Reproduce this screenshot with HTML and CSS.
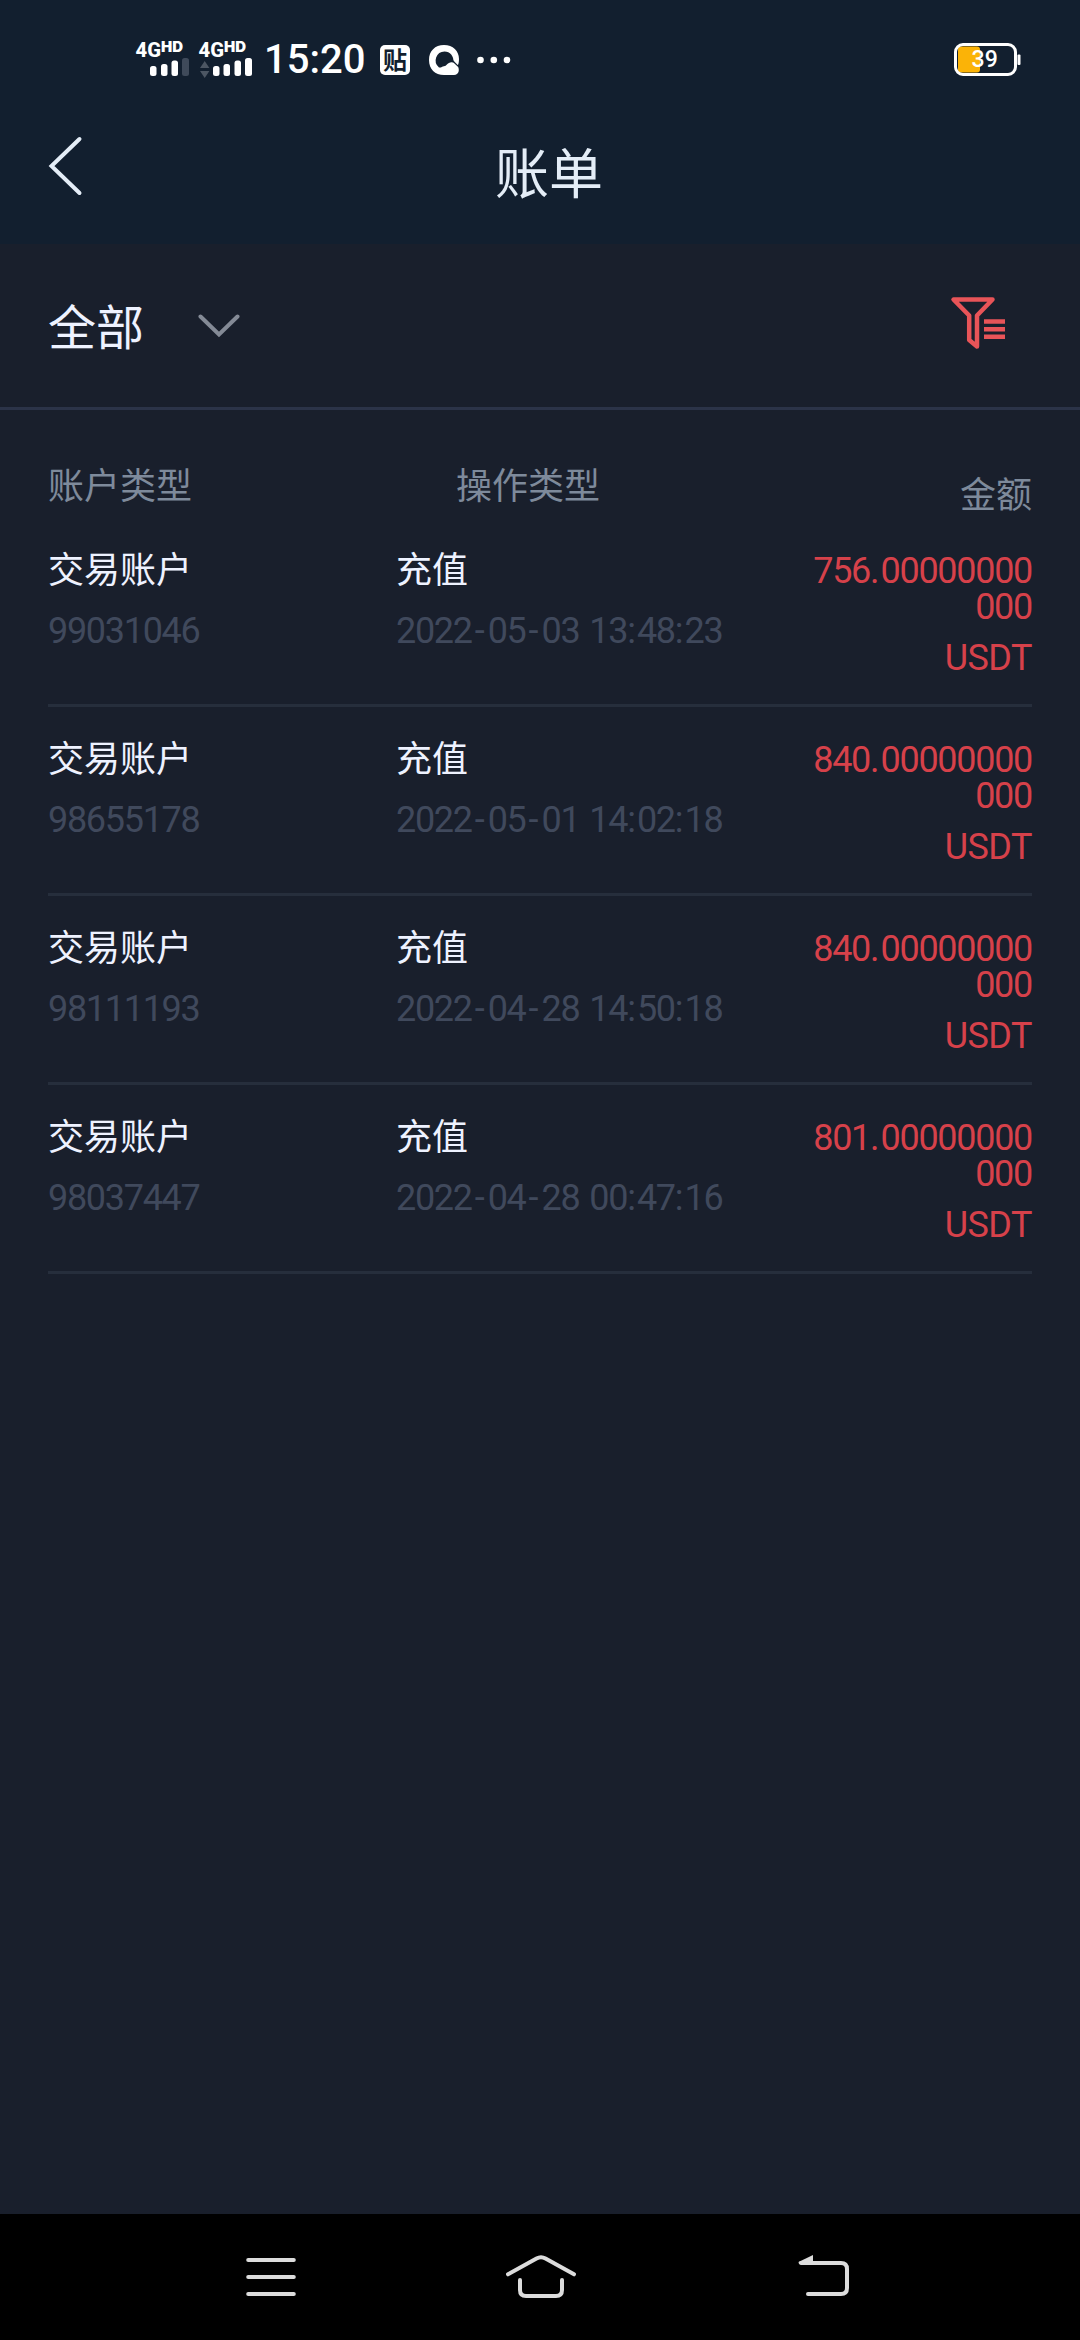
FILE: index.html
```html
<!DOCTYPE html>
<html lang="zh-CN">
<head>
<meta charset="utf-8">
<title>账单</title>
<link rel="stylesheet" href="styles.css">
</head>
<body>
<div class="app">
  <header class="top">
    <div class="status">
      <svg class="signals" width="130" height="44" viewBox="130 38 130 44">
        <g fill="#fff" class="net">
          <text x="135.500" y="57" class="gen" textLength="25.500" lengthAdjust="spacingAndGlyphs">4G</text>
          <text x="161" y="52" class="hd" textLength="22" lengthAdjust="spacingAndGlyphs">HD</text>
          <text x="198.500" y="57" class="gen" textLength="25.500" lengthAdjust="spacingAndGlyphs">4G</text>
          <text x="224" y="52" class="hd" textLength="22" lengthAdjust="spacingAndGlyphs">HD</text>
        </g>
        <g fill="#fff">
          <rect x="150" y="66" width="6.500" height="10" rx="2.500"/>
          <rect x="161" y="64" width="6.500" height="12" rx="2.500"/>
          <rect x="171.500" y="60.500" width="6.500" height="15.500" rx="2.500"/>
          <rect x="182" y="58" width="7" height="18" rx="2.500" fill="#3f4a5a"/>
          <rect x="213" y="66" width="6.500" height="10" rx="2.500"/>
          <rect x="223.500" y="64" width="6.500" height="12" rx="2.500"/>
          <rect x="234.500" y="60.500" width="6.500" height="15.500" rx="2.500"/>
          <rect x="245" y="58" width="7" height="18" rx="2.500"/>
        </g>
        <path d="M200 68l4.700-7 4.700 7zM200 71h9.400l-4.700 7z" fill="#4c5663"/>
      </svg>
      <span class="clock">15:20</span>
      <span class="tieba">贴</span>
      <svg class="browser" width="31" height="31" viewBox="0 0 31 31">
        <path fill-rule="evenodd" fill="#fff" d="M15 0C24 0 30 6 30 14c0 3-.5 5-1.500 7C31 24 30 30 25 30H15C6 30 0 24 0 15S6 0 15 0zM15.500 6.500A9 9 0 0 0 10 22.500c2 .500 3-1 5-1.300 2.500 0 3.500-4 7.500-4 1 0 1.500.300 2 .500C25 11 21 6.500 15.500 6.500z"/>
        <path d="M22.500 15.500c3 .500 4 5 8 6" fill="none" stroke="#121f2f" stroke-width="1.300"/>
      </svg>
      <svg class="more" width="34" height="8" viewBox="0 0 34 8"><g fill="#fff"><circle cx="3.500" cy="4" r="3.300"/><circle cx="16.800" cy="4" r="3.300"/><circle cx="30" cy="4" r="3.300"/></g></svg>
      <svg class="battery" width="68" height="34" viewBox="953 43 68 34">
        <rect x="958" y="46.500" width="22" height="26" rx="3" fill="#fbb307"/>
        <rect x="955.500" y="44.500" width="60" height="30" rx="7.500" fill="none" stroke="#fff" stroke-width="3"/>
        <rect x="1017.500" y="54.500" width="3" height="10.500" rx="1" fill="#fff"/>
        <text x="984.700" y="67" text-anchor="middle" class="pct" fill="#fff">39</text>
      </svg>
    </div>
    <div class="titlebar">
      <svg class="back" width="36" height="62" viewBox="0 0 36 62"><path d="M31.500 5L3.500 32l28 27" fill="none" stroke="#e4edf7" stroke-width="4" stroke-linecap="round"/></svg>
      <h1 class="title">账单</h1>
    </div>
  </header>

  <section class="filter">
    <span class="all">全部</span>
    <svg class="chevron" width="42" height="24" viewBox="0 0 42 24"><path d="M2.500 2.500L21 20.500 39.500 2.500" fill="none" stroke="#848a96" stroke-width="4" stroke-linecap="round"/></svg>
    <svg class="funnel" width="56" height="56" viewBox="950 297 56 56">
      <path d="M953.500 300.500H992.500L977 316.500V347.500L969.200 341V316.500Z" fill="none" stroke="#e85458" stroke-width="4.500" stroke-linejoin="round"/>
      <path d="M984 322.500h21M984 330.300h21M984 337.800h21" stroke="#e85458" stroke-width="4.600"/>
    </svg>
  </section>

  <main class="list">
    <div class="heads"><span class="h-account">账户类型</span><span class="h-action">操作类型</span><span class="h-amount">金额</span></div>
    <article class="row">
      <div class="account"><b>交易账户</b><i>99031046</i></div>
      <div class="action"><b>充值</b><i>2022<s>-</s>05<s>-</s>03<u> </u>13<em>:</em>48<em>:</em>23</i></div>
      <div class="amount"><p>756<em>.</em>00000000<br>000</p><p class="unit">USDT</p></div>
    </article>
    <article class="row">
      <div class="account"><b>交易账户</b><i>98655178</i></div>
      <div class="action"><b>充值</b><i>2022<s>-</s>05<s>-</s>01<u> </u>14<em>:</em>02<em>:</em>18</i></div>
      <div class="amount"><p>840<em>.</em>00000000<br>000</p><p class="unit">USDT</p></div>
    </article>
    <article class="row">
      <div class="account"><b>交易账户</b><i>98111193</i></div>
      <div class="action"><b>充值</b><i>2022<s>-</s>04<s>-</s>28<u> </u>14<em>:</em>50<em>:</em>18</i></div>
      <div class="amount"><p>840<em>.</em>00000000<br>000</p><p class="unit">USDT</p></div>
    </article>
    <article class="row">
      <div class="account"><b>交易账户</b><i>98037447</i></div>
      <div class="action"><b>充值</b><i>2022<s>-</s>04<s>-</s>28<u> </u>00<em>:</em>47<em>:</em>16</i></div>
      <div class="amount"><p>801<em>.</em>00000000<br>000</p><p class="unit">USDT</p></div>
    </article>
  </main>

  <nav class="nav">
    <svg width="54" height="46" viewBox="244 2254 54 46"><path d="M248.200 2260h45.600M248.200 2277h45.600M248.200 2294h45.600" stroke="#dcdcdc" stroke-width="4" stroke-linecap="round"/></svg>
    <svg class="home" width="74" height="46" viewBox="504 2254 74 46"><path d="M508 2274.300L536.500 2258.500Q541 2256 545.500 2258.500L574 2274.300M520 2280V2290Q520 2296 526 2296H556Q562 2296 562 2290V2280" fill="none" stroke="#dcdcdc" stroke-width="4" stroke-linecap="round"/></svg>
    <svg width="54" height="46" viewBox="796 2254 54 46"><path d="M801 2263H841Q847 2263 847 2269V2288Q847 2294 841 2294H808" fill="none" stroke="#dcdcdc" stroke-width="4" stroke-linecap="round"/><path d="M798.500 2262L813 2255V2264H799Z" fill="#dcdcdc"/></svg>
  </nav>
</div>
</body>
</html>
```

FILE: styles.css
```css
* { box-sizing: border-box; margin: 0; padding: 0; }
body { background: #191f2c; font-family: "Noto Sans CJK SC", sans-serif; }
svg { display: block; flex: none; }
.app { width: 1080px; height: 2340px; display: flex; flex-direction: column; }

.top { height: 244px; background: #121f2f; }
.status { height: 120px; padding: 0 59px 0 130px; display: flex; align-items: center; }
.gen { font: 800 20px Roboto, sans-serif; }
.hd { font: 900 14px Inter, sans-serif; }
.clock { width: 114px; padding-left: 4px; font: 500 40px/44px Roboto, sans-serif; color: #fff; white-space: nowrap; }
.tieba { margin-left: 6px; width: 30px; height: 30px; border-radius: 5px; background: #fff; color: #121f2f; font-size: 24px; line-height: 28px; font-weight: 700; text-align: center; }
.browser { margin-left: 19px; }
.more { margin-left: 17px; }
.battery { margin-left: auto; }
.pct { font: 500 23px Roboto, sans-serif; }

.titlebar { height: 124px; padding: 14px 0 0 48px; display: grid; grid-template-columns: 36px 1fr 66px; }
.title { margin-top: -3px; font-size: 54px; line-height: 80px; font-weight: 400; color: #e4edf7; text-align: center; }

.filter { height: 166px; padding: 0 74px 3px 48px; border-bottom: 3px solid #2b3348; display: flex; align-items: center; }
.all { font-size: 48px; line-height: 70px; font-weight: 400; color: #eef2ff; }
.chevron { margin: 3px 0 0 54px; }
.funnel { margin-left: auto; }

.list { flex: 1; padding: 43px 48px 0; font-size: 36px; }
.heads { height: 65px; display: grid; grid-template-columns: 408px 1fr auto; line-height: 60px; font-weight: 400; color: #7e8a9b; }
.h-amount { padding-top: 9px; }
.row { height: 189px; padding-top: 19px; display: grid; grid-template-columns: 348px 1fr 240px; border-bottom: 3px solid #262e3c; }
.row b { display: block; height: 64px; line-height: 60px; font-weight: 400; color: #eef2ff; }
.row i { display: block; font: 400 36px/60px Roboto, sans-serif; letter-spacing: -1.300px; color: #40495c; white-space: nowrap; }
.row s { margin: 0 3px; text-decoration: none; letter-spacing: 0; }
.row u { text-decoration: none; letter-spacing: 1px; white-space: pre; }
.row em { font-style: normal; letter-spacing: 1px; }
.amount { padding-top: 16px; font: 400 36px/36px Roboto, sans-serif; letter-spacing: -1.300px; text-align: right; color: #d6414a; }
.unit { margin-top: 15px; letter-spacing: -0.500px; }

.nav { height: 126px; padding: 0 230px 0 244px; background: #000; display: flex; align-items: center; justify-content: space-between; }
.home { margin-right: 12px; }
```
